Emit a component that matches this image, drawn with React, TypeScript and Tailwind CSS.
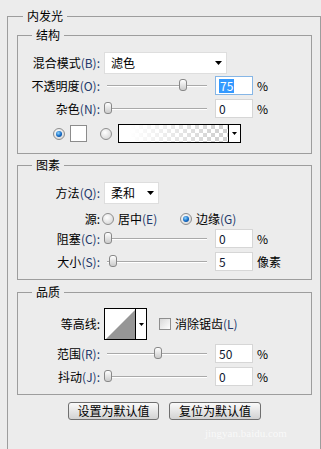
import React from "react";

function K({ k }: { k: string }) {
  return <span className="text-[#22386a]">({k}):</span>;
}

function Group({ title, className, children }: { title: string; className?: string; children: React.ReactNode }) {
  return (
    <div className={"border border-[#9d9d9d] " + (className ?? "")}>
      <div className="-mt-[9px] ml-[14px] w-fit bg-[#ececec] px-[4px] leading-[16px]">{title}</div>
      {children}
    </div>
  );
}

function Arrow() {
  return (
    <svg width="7" height="4" viewBox="0 0 7 4" className="shrink-0">
      <polygon points="0,0 7,0 3.5,4" fill="#000" />
    </svg>
  );
}

function SmallArrow() {
  return (
    <svg width="5" height="3" viewBox="0 0 5 3" className="shrink-0">
      <polygon points="0,0 5,0 2.5,3" fill="#000" />
    </svg>
  );
}

function Radio({ checked, className }: { checked?: boolean; className?: string }) {
  return (
    <div
      className={
        "flex h-[12px] w-[12px] shrink-0 items-center justify-center rounded-full border border-[#8e8e8e] bg-[radial-gradient(circle_at_40%_35%,#ffffff,#cfcfcf)] " +
        (className ?? "")
      }
    >
      {checked && (
        <div className="h-[6px] w-[6px] rounded-full bg-[radial-gradient(circle_at_40%_35%,#8fd6ff,#1168c4_55%,#073a7c)]" />
      )}
    </div>
  );
}

function Slider({ value, className }: { value: number; className?: string }) {
  return (
    <div className={"relative flex h-[19px] w-[110px] shrink-0 items-center " + (className ?? "")}>
      <div className="ml-[4px] h-[2px] w-[100px] border-t border-b border-t-[#a9a9a9] border-b-white" />
      <div
        className="absolute top-[3px] h-[12px] w-[8px] rounded-[3px] border border-[#888888] bg-gradient-to-b from-white to-[#cbcbcb]"
        style={{ left: value + 1 }}
      />
    </div>
  );
}

function Field({ value, focused, className }: { value: string; focused?: boolean; className?: string }) {
  return (
    <div
      className={
        "flex h-[19px] w-[38px] shrink-0 items-center bg-white pl-[3px] leading-[14px] text-[#101830] border " +
        (focused ? "border-[#86b6e6] " : "border-[#d6d6d6] ") +
        (className ?? "")
      }
    >
      {focused ? <span className="bg-[#3399ff] px-[1px] text-white">{value}</span> : <span>{value}</span>}
    </div>
  );
}

function Label({ children }: { children: React.ReactNode }) {
  return <div className="w-[82px] shrink-0 text-right leading-[16px]">{children}</div>;
}

function SliderRow({
  label,
  k,
  value,
  unit,
  focused,
  className,
}: {
  label: string;
  k: string;
  value: number;
  unit: string;
  focused?: boolean;
  className?: string;
}) {
  return (
    <div className={"flex h-[19px] items-center " + (className ?? "")}>
      <Label>
        {label}
        <K k={k} />
      </Label>
      <Slider value={value} className="ml-[3px]" />
      <Field value={String(value)} focused={focused} className="ml-[2px]" />
      <span className="ml-[4px] leading-[16px]">{unit}</span>
    </div>
  );
}

export default function App() {
  return (
    <div className="h-[449px] w-[321px] overflow-hidden bg-[#ececec] pl-[7px] pt-[16px] text-[12px] text-black [font-family:'Noto_Sans_CJK_SC',sans-serif]">
      <div className="relative h-[460px] w-[314px] border-l border-r border-t border-[#9d9d9d]">
        <div className="-mt-[9px] ml-[15px] w-fit bg-[#ececec] px-[4px] leading-[16px]">内发光</div>

        {/* 结构 */}
        <Group title="结构" className="ml-[9px] mt-[11px] w-[295px] pb-[10px]">
          <div className="mt-[9px] flex h-[22px] items-center">
            <Label>
              混合模式
              <K k="B" />
            </Label>
            <div className="ml-[4px] flex h-[22px] w-[123px] items-center justify-between border border-[#dedede] bg-white pl-[6px] pr-[4px]">
              <span className="leading-[16px]">滤色</span>
              <Arrow />
            </div>
          </div>
          <SliderRow label="不透明度" k="O" value={75} unit="%" focused className="mt-[2px]" />
          <SliderRow label="杂色" k="N" value={0} unit="%" className="mt-[4px]" />
          <div className="mt-[6px] flex h-[19px] items-center">
            <Radio checked className="ml-[35px]" />
            <div className="ml-[5px] h-[17px] w-[17px] shrink-0 border border-[#8c8c8c] bg-white" />
            <Radio className="ml-[13px]" />
            <div className="ml-[6px] flex h-[19px] w-[123px] shrink-0 border border-black">
              <div className="h-full flex-1 bg-[repeating-conic-gradient(#d2d2d2_0%_25%,#ffffff_0%_50%)] bg-[length:8px_8px]">
                <div className="h-full w-full bg-gradient-to-r from-white from-10% to-transparent to-90%" />
              </div>
              <div className="flex h-full w-[12px] items-center justify-center border-l border-black bg-white">
                <SmallArrow />
              </div>
            </div>
          </div>
        </Group>

        {/* 图素 */}
        <Group title="图素" className="ml-[9px] mt-[11px] w-[295px] pb-[8px]">
          <div className="mt-[9px] flex h-[22px] items-center">
            <Label>
              方法
              <K k="Q" />
            </Label>
            <div className="ml-[4px] flex h-[22px] w-[55px] items-center justify-between border border-[#dedede] bg-white pl-[6px] pr-[4px]">
              <span className="leading-[16px]">柔和</span>
              <Arrow />
            </div>
          </div>
          <div className="mt-[5px] flex h-[19px] items-center">
            <Label>源:</Label>
            <Radio className="ml-[2px]" />
            <span className="ml-[4px] w-[62px] shrink-0 leading-[16px]">
              居中<span className="text-[#22386a]">(E)</span>
            </span>
            <Radio checked />
            <span className="ml-[4px] leading-[16px]">
              边缘<span className="text-[#22386a]">(G)</span>
            </span>
          </div>
          <SliderRow label="阻塞" k="C" value={0} unit="%" className="mt-[1px]" />
          <SliderRow label="大小" k="S" value={5} unit="像素" className="mt-[4px]" />
        </Group>

        {/* 品质 */}
        <Group title="品质" className="ml-[9px] mt-[12px] w-[295px] pb-[8px]">
          <div className="mt-[8px] flex h-[32px] items-center">
            <Label>等高线:</Label>
            <div className="ml-[4px] flex h-[32px] w-[43px] shrink-0 border border-black bg-white">
              <svg width="30" height="30" viewBox="0 0 30 30" className="shrink-0">
                <rect x="0" y="0" width="30" height="30" fill="#ffffff" />
                <polygon points="1,30 30,1 30,30" fill="#969696" />
              </svg>
              <div className="flex h-full flex-1 items-center justify-center border-l border-black">
                <SmallArrow />
              </div>
            </div>
            <div className="ml-[12px] h-[12px] w-[12px] shrink-0 border border-[#8e8e8e] bg-gradient-to-br from-[#d8d8d8] to-white" />
            <span className="ml-[4px] leading-[16px]">
              消除锯齿<span className="text-[#22386a]">(L)</span>
            </span>
          </div>
          <SliderRow label="范围" k="R" value={50} unit="%" className="mt-[4px]" />
          <SliderRow label="抖动" k="J" value={0} unit="%" className="mt-[4px]" />
        </Group>

        <div className="mt-[7px] flex gap-[10px] pl-[60px]">
          <div className="flex h-[18px] w-[91px] items-center justify-center rounded-[3px] border border-[#6f6f6f] bg-gradient-to-b from-[#fafafa] to-[#d2d2d2] leading-[14px]">
            设置为默认值
          </div>
          <div className="flex h-[18px] w-[92px] items-center justify-center rounded-[3px] border border-[#6f6f6f] bg-gradient-to-b from-[#fafafa] to-[#d2d2d2] leading-[14px]">
            复位为默认值
          </div>
        </div>

        <div className="pointer-events-none absolute left-[197px] top-[410px] text-[11px] leading-[12px] text-white opacity-70 [font-family:'Liberation_Serif',serif]">
          jingyan.baidu.com
        </div>
      </div>
    </div>
  );
}
